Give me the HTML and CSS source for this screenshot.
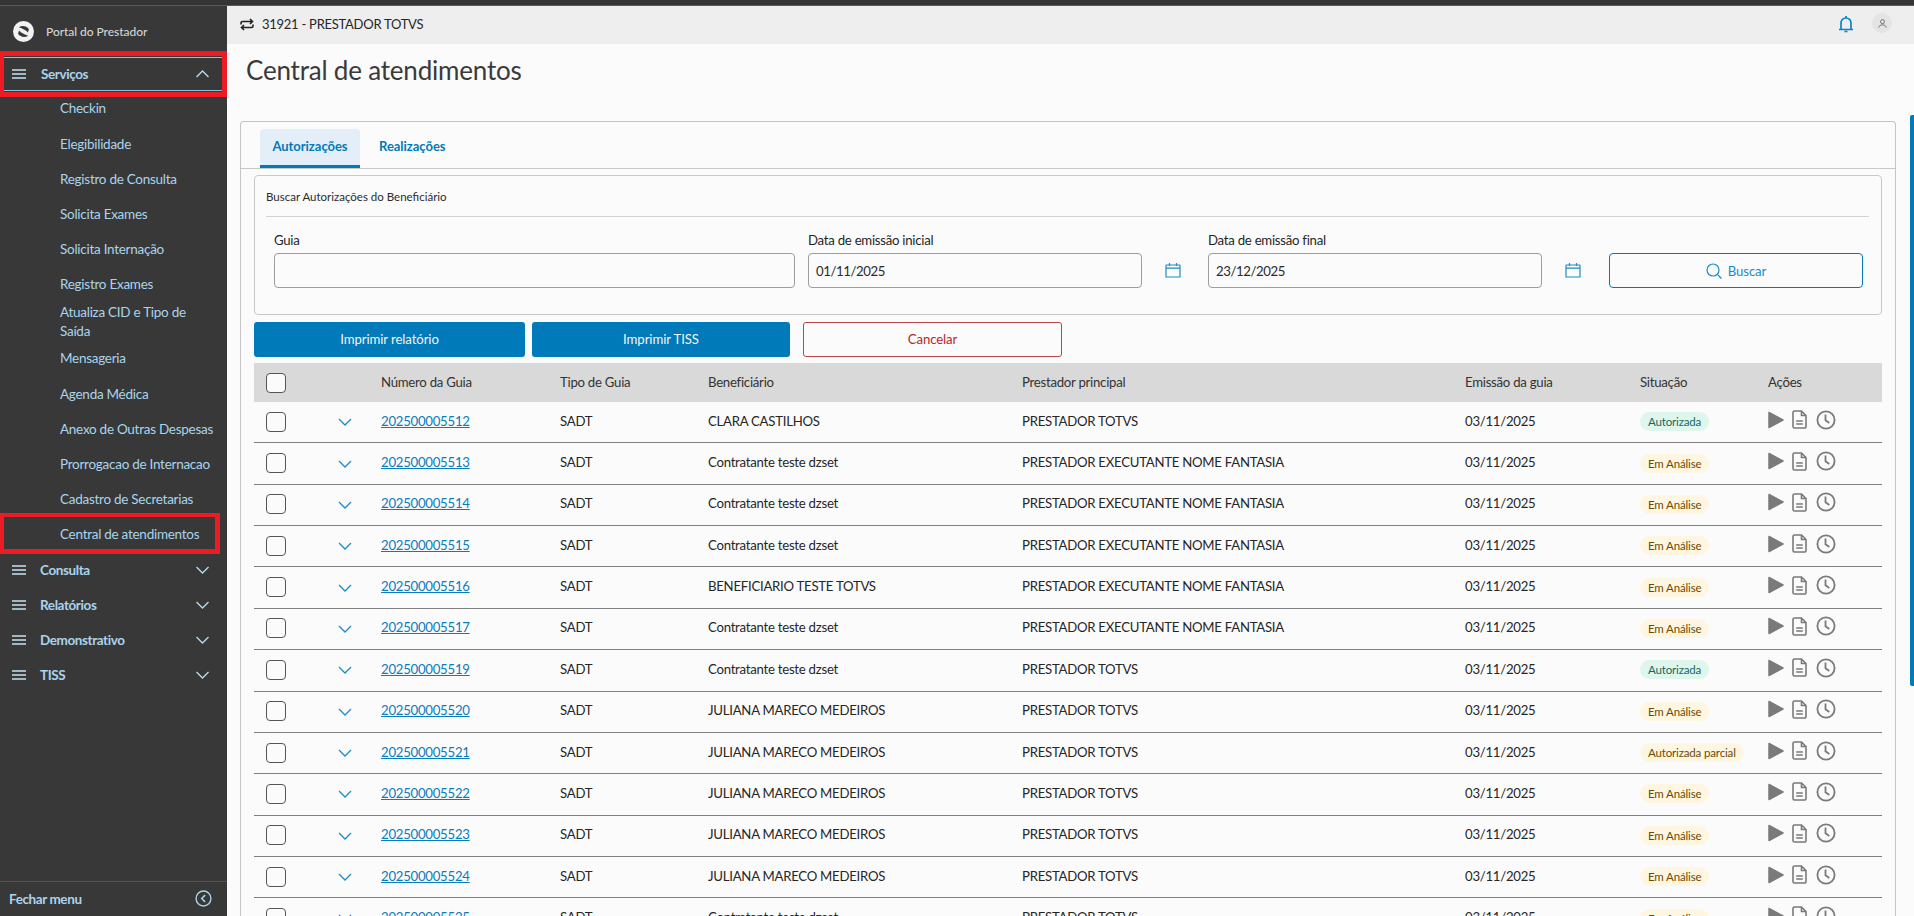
FILE: index.html
```html
<!DOCTYPE html>
<html lang="pt-BR">
<head>
<meta charset="utf-8">
<title>Central de atendimentos</title>
<link rel="stylesheet" href="styles.css">
</head>
<body>
<svg class="defs" width="0" height="0" aria-hidden="true">
  <symbol id="i-burger" viewBox="0 0 14 10"><path d="M0 1h14M0 5h14M0 9h14" fill="none" stroke="currentColor" stroke-width="1.6"/></symbol>
  <symbol id="i-down" viewBox="0 0 14 8"><path d="M1 1l6 6 6-6" fill="none" stroke="currentColor" stroke-width="1.3"/></symbol>
  <symbol id="i-up" viewBox="0 0 14 8"><path d="M1 7l6-6 6 6" fill="none" stroke="currentColor" stroke-width="1.4"/></symbol>
  <symbol id="i-cal" viewBox="0 0 16 16"><path d="M1.500 3h13a.5.5 0 0 1 .5.5V15H1V3.500a.5.5 0 0 1 .5-.5zM1 6.200h14M4.500 1v3M11.500 1v3" fill="none" stroke="currentColor" stroke-width="1.200"/></symbol>
  <symbol id="i-play" viewBox="0 0 16 18"><path d="M1 1.500L15 9 1 16.500z" fill="currentColor" stroke="currentColor" stroke-width="1.500" stroke-linejoin="round"/></symbol>
  <symbol id="i-doc" viewBox="0 0 15 19"><path d="M1 2.500A1.500 1.500 0 0 1 2.500 1H9.500L14 5.500V16.500A1.500 1.500 0 0 1 12.500 18H2.500A1.500 1.500 0 0 1 1 16.500zM9.500 1V5.500H14M4.200 11h6.600M4.200 14h6.600" fill="none" stroke="currentColor" stroke-width="1.600"/></symbol>
  <symbol id="i-clock" viewBox="0 0 20 20"><circle cx="10" cy="10" r="8.600" fill="none" stroke="currentColor" stroke-width="1.800"/><path d="M9.500 4.500v5.700l3.800 2.800" fill="none" stroke="currentColor" stroke-width="1.800"/></symbol>
</svg>
<div class="topbar"></div>
<div class="app">
  <aside class="sidebar">
    <div class="brand">
      <svg class="brand-logo" viewBox="0 0 20 20"><circle cx="10" cy="10" r="10" fill="#f2f2f2"/><path d="M5.500 6C8.500 4 13 4.500 15.200 7.800L14.200 11C12.200 8.800 9 7 5.500 6z" fill="#383838"/><path d="M14.500 14C11.500 16 7 15.500 4.800 12.200L5.800 9C7.800 11.200 11 13 14.500 14z" fill="#383838"/></svg>
      <span>Portal do Prestador</span>
    </div>
    <nav class="menu">
      <div class="section open"><svg class="burger"><use href="#i-burger"/></svg><span class="section-label">Serviços</span><svg class="caret"><use href="#i-up"/></svg></div>
      <div class="sub">Checkin</div>
      <div class="sub">Elegibilidade</div>
      <div class="sub">Registro de Consulta</div>
      <div class="sub">Solicita Exames</div>
      <div class="sub">Solicita Internação</div>
      <div class="sub">Registro Exames</div>
      <div class="sub two"><span>Atualiza CID e Tipo de<br>Saída</span></div>
      <div class="sub">Mensageria</div>
      <div class="sub">Agenda Médica</div>
      <div class="sub">Anexo de Outras Despesas</div>
      <div class="sub">Prorrogacao de Internacao</div>
      <div class="sub">Cadastro de Secretarias</div>
      <div class="sub">Central de atendimentos</div>
      <div class="section"><svg class="burger"><use href="#i-burger"/></svg><span class="section-label">Consulta</span><svg class="caret"><use href="#i-down"/></svg></div>
      <div class="section"><svg class="burger"><use href="#i-burger"/></svg><span class="section-label">Relatórios</span><svg class="caret"><use href="#i-down"/></svg></div>
      <div class="section"><svg class="burger"><use href="#i-burger"/></svg><span class="section-label">Demonstrativo</span><svg class="caret"><use href="#i-down"/></svg></div>
      <div class="section"><svg class="burger"><use href="#i-burger"/></svg><span class="section-label">TISS</span><svg class="caret"><use href="#i-down"/></svg></div>
    </nav>
    <div class="side-foot">
      <span>Fechar menu</span>
      <svg class="foot-icon" viewBox="0 0 16 16"><circle cx="8" cy="8" r="7" fill="none" stroke="currentColor" stroke-width="1.300"/><path d="M9.500 4.800L6.300 8l3.200 3.200" fill="none" stroke="currentColor" stroke-width="1.400"/></svg>
    </div>
  </aside>
  <main class="main">
    <header class="head">
      <svg class="sync" viewBox="0 0 14 13"><path d="M1 6.500V5A1.500 1.500 0 0 1 2.500 3.500H12M10 1L12.500 3.500 10 6M13 6.500V8A1.500 1.500 0 0 1 11.500 9.500H2M4 7L1.500 9.500 4 12" fill="none" stroke="#222" stroke-width="1.600"/></svg>
      <span class="head-title">31921 - PRESTADOR TOTVS</span>
      <svg class="bell" viewBox="0 0 16 18"><path d="M1 14.500h14M3 14.500V8a5 5 0 0 1 10 0v6.500M8 1v2M6.500 16.500h3" fill="none" stroke="#0a84c6" stroke-width="1.700"/></svg>
      <span class="avatar"><svg viewBox="0 0 10 10"><circle cx="5" cy="3" r="2.200" fill="none" stroke="#666" stroke-width="1"/><path d="M.8 9.500C1.300 7.300 3 6.500 5 6.500s3.700.8 4.200 3" fill="none" stroke="#666" stroke-width="1"/></svg></span>
    </header>
    <h1 class="page-title">Central de atendimentos</h1>
    <section class="card">
      <div class="tabs">
        <div class="tab active">Autorizações</div>
        <div class="tab">Realizações</div>
      </div>
      <div class="search">
        <div class="search-title">Buscar Autorizações do Beneficiário</div>
        <div class="form">
          <label class="field field-guia">Guia<input class="input" type="text"></label>
          <label class="field">Data de emissão inicial<input class="input" type="text" value="01/11/2025"></label>
          <svg class="cal"><use href="#i-cal"/></svg>
          <label class="field">Data de emissão final<input class="input" type="text" value="23/12/2025"></label>
          <svg class="cal"><use href="#i-cal"/></svg>
          <button class="btn-search" type="button"><svg viewBox="0 0 16 16"><circle cx="7" cy="7" r="6" fill="none" stroke="currentColor" stroke-width="1.200"/><path d="M11.300 11.300L15.500 15.500" stroke="currentColor" stroke-width="1.200"/></svg>Buscar</button>
        </div>
      </div>
      <div class="actions">
        <button class="btn primary wide" type="button">Imprimir relatório</button>
        <button class="btn primary" type="button">Imprimir TISS</button>
        <button class="btn danger" type="button">Cancelar</button>
      </div>
      <div class="table">
        <div class="row header">
          <span><input class="check" type="checkbox"></span><span></span>
          <span>Número da Guia</span><span>Tipo de Guia</span><span>Beneficiário</span><span>Prestador principal</span><span>Emissão da guia</span><span>Situação</span><span>Ações</span>
        </div>
        <div class="row"><span><input class="check" type="checkbox"></span><svg class="more"><use href="#i-down"/></svg><a class="link">202500005512</a><span>SADT</span><span>CLARA CASTILHOS</span><span>PRESTADOR TOTVS</span><span>03/11/2025</span><span class="cell-tag"><b class="tag ok">Autorizada</b></span><span class="ops"><svg class="op-play"><use href="#i-play"/></svg><svg class="op-doc"><use href="#i-doc"/></svg><svg class="op-clock"><use href="#i-clock"/></svg></span></div>
        <div class="row"><span><input class="check" type="checkbox"></span><svg class="more"><use href="#i-down"/></svg><a class="link">202500005513</a><span>SADT</span><span>Contratante teste dzset</span><span>PRESTADOR EXECUTANTE NOME FANTASIA</span><span>03/11/2025</span><span class="cell-tag"><b class="tag wait">Em Análise</b></span><span class="ops"><svg class="op-play"><use href="#i-play"/></svg><svg class="op-doc"><use href="#i-doc"/></svg><svg class="op-clock"><use href="#i-clock"/></svg></span></div>
        <div class="row"><span><input class="check" type="checkbox"></span><svg class="more"><use href="#i-down"/></svg><a class="link">202500005514</a><span>SADT</span><span>Contratante teste dzset</span><span>PRESTADOR EXECUTANTE NOME FANTASIA</span><span>03/11/2025</span><span class="cell-tag"><b class="tag wait">Em Análise</b></span><span class="ops"><svg class="op-play"><use href="#i-play"/></svg><svg class="op-doc"><use href="#i-doc"/></svg><svg class="op-clock"><use href="#i-clock"/></svg></span></div>
        <div class="row"><span><input class="check" type="checkbox"></span><svg class="more"><use href="#i-down"/></svg><a class="link">202500005515</a><span>SADT</span><span>Contratante teste dzset</span><span>PRESTADOR EXECUTANTE NOME FANTASIA</span><span>03/11/2025</span><span class="cell-tag"><b class="tag wait">Em Análise</b></span><span class="ops"><svg class="op-play"><use href="#i-play"/></svg><svg class="op-doc"><use href="#i-doc"/></svg><svg class="op-clock"><use href="#i-clock"/></svg></span></div>
        <div class="row"><span><input class="check" type="checkbox"></span><svg class="more"><use href="#i-down"/></svg><a class="link">202500005516</a><span>SADT</span><span>BENEFICIARIO TESTE TOTVS</span><span>PRESTADOR EXECUTANTE NOME FANTASIA</span><span>03/11/2025</span><span class="cell-tag"><b class="tag wait">Em Análise</b></span><span class="ops"><svg class="op-play"><use href="#i-play"/></svg><svg class="op-doc"><use href="#i-doc"/></svg><svg class="op-clock"><use href="#i-clock"/></svg></span></div>
        <div class="row"><span><input class="check" type="checkbox"></span><svg class="more"><use href="#i-down"/></svg><a class="link">202500005517</a><span>SADT</span><span>Contratante teste dzset</span><span>PRESTADOR EXECUTANTE NOME FANTASIA</span><span>03/11/2025</span><span class="cell-tag"><b class="tag wait">Em Análise</b></span><span class="ops"><svg class="op-play"><use href="#i-play"/></svg><svg class="op-doc"><use href="#i-doc"/></svg><svg class="op-clock"><use href="#i-clock"/></svg></span></div>
        <div class="row"><span><input class="check" type="checkbox"></span><svg class="more"><use href="#i-down"/></svg><a class="link">202500005519</a><span>SADT</span><span>Contratante teste dzset</span><span>PRESTADOR TOTVS</span><span>03/11/2025</span><span class="cell-tag"><b class="tag ok">Autorizada</b></span><span class="ops"><svg class="op-play"><use href="#i-play"/></svg><svg class="op-doc"><use href="#i-doc"/></svg><svg class="op-clock"><use href="#i-clock"/></svg></span></div>
        <div class="row"><span><input class="check" type="checkbox"></span><svg class="more"><use href="#i-down"/></svg><a class="link">202500005520</a><span>SADT</span><span>JULIANA MARECO MEDEIROS</span><span>PRESTADOR TOTVS</span><span>03/11/2025</span><span class="cell-tag"><b class="tag wait">Em Análise</b></span><span class="ops"><svg class="op-play"><use href="#i-play"/></svg><svg class="op-doc"><use href="#i-doc"/></svg><svg class="op-clock"><use href="#i-clock"/></svg></span></div>
        <div class="row"><span><input class="check" type="checkbox"></span><svg class="more"><use href="#i-down"/></svg><a class="link">202500005521</a><span>SADT</span><span>JULIANA MARECO MEDEIROS</span><span>PRESTADOR TOTVS</span><span>03/11/2025</span><span class="cell-tag"><b class="tag wait">Autorizada parcial</b></span><span class="ops"><svg class="op-play"><use href="#i-play"/></svg><svg class="op-doc"><use href="#i-doc"/></svg><svg class="op-clock"><use href="#i-clock"/></svg></span></div>
        <div class="row"><span><input class="check" type="checkbox"></span><svg class="more"><use href="#i-down"/></svg><a class="link">202500005522</a><span>SADT</span><span>JULIANA MARECO MEDEIROS</span><span>PRESTADOR TOTVS</span><span>03/11/2025</span><span class="cell-tag"><b class="tag wait">Em Análise</b></span><span class="ops"><svg class="op-play"><use href="#i-play"/></svg><svg class="op-doc"><use href="#i-doc"/></svg><svg class="op-clock"><use href="#i-clock"/></svg></span></div>
        <div class="row"><span><input class="check" type="checkbox"></span><svg class="more"><use href="#i-down"/></svg><a class="link">202500005523</a><span>SADT</span><span>JULIANA MARECO MEDEIROS</span><span>PRESTADOR TOTVS</span><span>03/11/2025</span><span class="cell-tag"><b class="tag wait">Em Análise</b></span><span class="ops"><svg class="op-play"><use href="#i-play"/></svg><svg class="op-doc"><use href="#i-doc"/></svg><svg class="op-clock"><use href="#i-clock"/></svg></span></div>
        <div class="row"><span><input class="check" type="checkbox"></span><svg class="more"><use href="#i-down"/></svg><a class="link">202500005524</a><span>SADT</span><span>JULIANA MARECO MEDEIROS</span><span>PRESTADOR TOTVS</span><span>03/11/2025</span><span class="cell-tag"><b class="tag wait">Em Análise</b></span><span class="ops"><svg class="op-play"><use href="#i-play"/></svg><svg class="op-doc"><use href="#i-doc"/></svg><svg class="op-clock"><use href="#i-clock"/></svg></span></div>
        <div class="row"><span><input class="check" type="checkbox"></span><svg class="more"><use href="#i-down"/></svg><a class="link">202500005525</a><span>SADT</span><span>Contratante teste dzset</span><span>PRESTADOR TOTVS</span><span>03/11/2025</span><span class="cell-tag"><b class="tag wait">Em Análise</b></span><span class="ops"><svg class="op-play"><use href="#i-play"/></svg><svg class="op-doc"><use href="#i-doc"/></svg><svg class="op-clock"><use href="#i-clock"/></svg></span></div>
      </div>
    </section>
  </main>
</div>
<div class="scroll-thumb"></div>
<div class="mark mark-services"></div>
<div class="mark mark-central"></div>
</body>
</html>
```
FILE: styles.css
```css
* { box-sizing: border-box; }
html, body { height: 100%; }
body {
  margin: 0;
  height: 100vh;
  overflow: hidden;
  display: flex;
  flex-direction: column;
  position: relative;
  font-family: Lato, "Noto Sans", sans-serif;
  font-size: 13.2px;
  letter-spacing: -.26px;
  color: #262626;
  background: #fbfbfb;
}
.defs { position: absolute; }
.topbar { height: 6px; flex: none; background: #343434; border-bottom: 1px solid #5a5a5a; }
.app { flex: 1; display: flex; min-height: 0; }

.sidebar {
  width: 227px;
  flex: none;
  display: flex;
  flex-direction: column;
  background: #383838;
  color: #a9d4ec;
  font-size: 13.5px;
  letter-spacing: -.27px;
}
.brand {
  height: 45px;
  flex: none;
  display: flex;
  align-items: center;
  gap: 12px;
  padding: 5px 0 0 13px;
  color: #d4d4d4;
  font-size: 12px;
  font-weight: 500;
  letter-spacing: -.05px;
}
.brand-logo { width: 21px; height: 21px; }
.menu { flex: 1; min-height: 0; padding-top: 6px; }
.section {
  height: 35.2px;
  display: flex;
  align-items: center;
  padding: 0 17px 0 12px;
  font-weight: 700;
  letter-spacing: -.4px;
}
.section.open {
  height: 34px;
  margin: 0 5px 0 4px;
  padding: 0 12px 0 8px;
  border-top: 1px solid #7cc9e0;
  border-bottom: 1px solid #7cc9e0;
}
.burger { width: 14px; height: 10px; flex: none; color: #c3e3f3; }
.section-label { flex: 1; padding-left: 14px; }
.section.open .section-label { padding-left: 15px; }
.caret { width: 15px; height: 8px; flex: none; color: #b8dcee; }
.sub {
  height: 35.2px;
  display: flex;
  align-items: center;
  padding: 0 8px 0 60px;
  line-height: 18.500px;
}
.sub.two { height: 39px; }
.side-foot {
  height: 35px;
  flex: none;
  display: flex;
  align-items: center;
  justify-content: space-between;
  padding: 0 15px 1px 9px;
  border-top: 1px solid #4e5557;
  font-weight: 700;
  letter-spacing: -.4px;
}
.foot-icon { width: 17px; height: 17px; }

.main { flex: 1; min-width: 0; display: flex; flex-direction: column; padding: 0 18px 0 13px; }
.head {
  height: 38px;
  flex: none;
  margin: 0 -18px 0 -13px;
  padding: 0 22px 2px 13px;
  display: flex;
  align-items: center;
  background: #eeeeee;
}
.sync { width: 14px; height: 13px; margin-right: 8px; }
.head-title { flex: 1; font-size: 13px; }
.bell { width: 16px; height: 18px; margin-right: 18px; }
.avatar {
  width: 20px;
  height: 20px;
  margin-top: -2px;
  border-radius: 50%;
  background: #e4e4e4;
  display: flex;
  align-items: center;
  justify-content: center;
}
.avatar svg { width: 9px; height: 9px; }
.page-title {
  height: 77px;
  flex: none;
  margin: 0;
  padding: 7px 0 0 6px;
  font-size: 26px;
  font-weight: 400;
  letter-spacing: -.2px;
  line-height: 38px;
  color: #3a3a3a;
}

.card {
  flex: 1;
  min-height: 0;
  overflow: hidden;
  border: 1px solid #c4c4c4;
  border-bottom: 0;
  border-radius: 4px 4px 0 0;
  padding: 0 13px;
}
.tabs {
  height: 47px;
  margin: 0 -13px;
  padding: 7px 0 0 19px;
  display: flex;
  gap: 6px;
  border-bottom: 1px solid #c8c8c8;
}
.tab {
  height: 39px;
  padding: 0 13px 5px;
  display: flex;
  align-items: center;
  color: #007ab8;
  font-size: 13px;
  font-weight: 700;
  letter-spacing: -.03px;
}
.tab.active {
  width: 100px;
  justify-content: center;
  padding: 0 0 2px;
  background: #e3eef9;
  border-radius: 4px 4px 0 0;
  border-bottom: 3px solid #007ab8;
}
.search {
  height: 140px;
  margin-top: 6px;
  padding: 0 12px 0 11px;
  border: 1px solid #c8c8c8;
  border-radius: 4px;
}
.search-title {
  height: 41px;
  padding-top: 12px;
  border-bottom: 1px solid #d4d4d4;
  font-size: 11.500px;
  letter-spacing: 0;
  line-height: 18px;
  color: #2c2c2c;
}
.form {
  display: grid;
  grid-template-columns: 534px 334px 66px 334px 67px 254px;
  padding: 14px 0 0 8px;
  align-items: end;
}
.field { display: flex; flex-direction: column; gap: 4px; line-height: 18px; }
.field-guia { width: 521px; }
.input {
  height: 35px;
  width: 100%;
  padding: 0 7px;
  border: 1px solid #9d9d9d;
  border-radius: 4px;
  background: #fbfbfb;
  font: 13.2px Lato, sans-serif;
  letter-spacing: -.4px;
  color: #2a2a2a;
}
.cal { width: 16px; height: 16px; color: #1a8cc9; justify-self: center; margin: 0 5px 10px 0; }
.btn-search {
  height: 35px;
  display: flex;
  align-items: center;
  justify-content: center;
  gap: 6px;
  border: 1px solid #007ab8;
  border-radius: 4px;
  background: #fbfbfb;
  color: #1a8cc9;
  font: 13.2px Lato, sans-serif;
  letter-spacing: -.1px;
}
.btn-search svg { width: 16px; height: 16px; }
.actions { display: flex; gap: 7px; margin-top: 7px; }
.btn {
  width: 258px;
  height: 35px;
  padding-bottom: 2px;
  border-radius: 3px;
  font: 13.2px Lato, sans-serif;
  letter-spacing: -.1px;
}
.btn.wide { width: 271px; }
.primary { background: #007ab8; border: 0; color: #f4f4f4; }
.danger { margin-left: 6px; width: 259px; background: #fbfbfb; border: 1px solid #b8474a; color: #b5282c; }

.table { margin-top: 6px; }
.row {
  height: 41.360px;
  display: grid;
  grid-template-columns: 76px 51px 179px 148px 314px 443px 175px 128px 115px;
  align-items: center;
  border-bottom: 1px solid #808080;
  padding-bottom: 1px;
  color: #262626;
}
.row > :first-child { padding-left: 12px; display: flex; }
.row > span, .row > a { margin-bottom: 2px; }
.row > span:first-child { margin-bottom: 0; }
.row.header { height: 39px; background: #d9d9d9; border: 0; padding-bottom: 0; color: #333; }
.check {
  appearance: none;
  width: 20px;
  height: 20px;
  margin: 0;
  border: 1px solid #555;
  border-radius: 4px;
  background: #fbfbfb;
}
.more { width: 14px; height: 8px; margin: 1px 0 0 8px; color: #1a8cc9; }
.link { color: #0a7cbd; text-decoration: underline; }
.row > .cell-tag { margin-bottom: 0; }
.tag {
  display: inline-block;
  height: 19px;
  padding: 0 8px;
  border-radius: 10px;
  font-size: 11.500px;
  font-weight: 400;
  letter-spacing: -.15px;
  line-height: 19px;
  vertical-align: middle;
}
.ok { background: #dff6ec; color: #17685c; }
.wait { background: #fff6e2; color: #6e4a00; }
.row > .ops { display: flex; align-items: center; margin-bottom: 4px; color: #7a7a7a; }
.op-play { width: 16px; height: 18px; }
.op-doc { width: 15px; height: 19px; margin-left: 8px; }
.op-clock { width: 20px; height: 20px; margin-left: 9px; }

.scroll-thumb {
  position: absolute;
  top: 115px;
  right: 0;
  width: 4px;
  height: 571px;
  background: #007ab8;
  border-radius: 2px 0 0 2px;
}
.mark { position: absolute; left: 0; border: solid #ed1c24; pointer-events: none; }
.mark-services { top: 51px; width: 227px; height: 46px; border-width: 5px 5px 5px 4px; }
.mark-central { top: 513px; width: 220px; height: 41px; border-width: 4px 5px 5px 4px; }
```
